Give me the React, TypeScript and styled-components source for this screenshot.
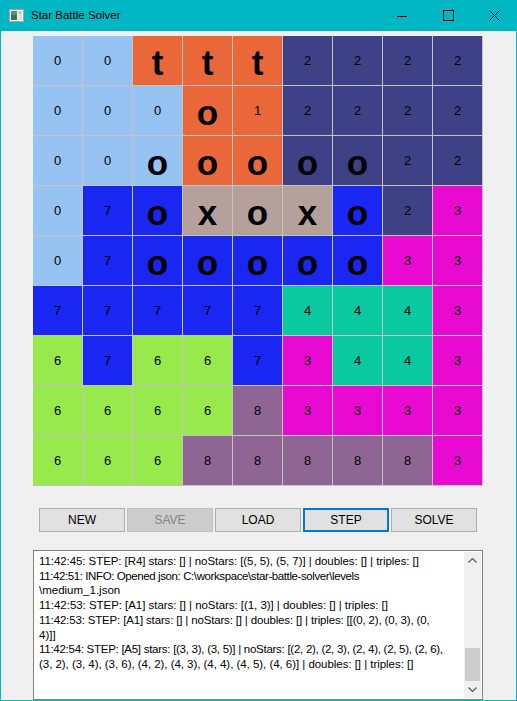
import React from "react";
import styled, { createGlobalStyle } from "styled-components";

const GlobalStyle = createGlobalStyle`
  html, body { margin: 0; padding: 0; background: #f0f0f0; }
  * { box-sizing: border-box; }
`;

const UI_FONT = `"Liberation Sans", Arial, sans-serif`;

const Window = styled.div`
  width: 517px;
  height: 701px;
  border: 1px solid #00b7c3;
  border-top: none;
  display: flex;
  flex-direction: column;
  background: #f0f0f0;
  font-family: ${UI_FONT};
  overflow: hidden;
`;

const TitleBar = styled.div`
  height: 31px;
  flex: none;
  background: #00b7c3;
  display: flex;
  align-items: center;
  margin: 0 -1px;
`;

const AppIcon = styled.svg`
  margin-left: 9px;
  margin-right: 7px;
  flex: none;
`;

const Title = styled.span`
  font-size: 11.5px;
  color: #000;
  flex: 1;
  padding-bottom: 1px;
`;

const CtrlButton = styled.div`
  width: 46px;
  height: 31px;
  display: flex;
  align-items: center;
  justify-content: center;
`;

const Client = styled.div`
  flex: 1;
  display: flex;
  flex-direction: column;
  padding: 5px 0 0 32px;
`;

const Board = styled.div`
  display: grid;
  grid-template-columns: repeat(9, 50px);
  grid-auto-rows: 50px;
  width: 450px;
`;

const Cell = styled.div<{ $bg: string }>`
  background: ${(p) => p.$bg};
  border-right: 1px solid #c4c4c4;
  border-bottom: 1px solid #c4c4c4;
  display: flex;
  align-items: center;
  justify-content: center;
  color: #000;
`;

const Num = styled.span`
  font-family: ${UI_FONT};
  font-size: 13px;
  line-height: 1;
`;

const Mark = styled.span`
  font-family: "Liberation Sans", Arial, sans-serif;
  font-weight: bold;
  font-size: 35px;
  line-height: 1;
  padding-top: 3px;
`;

const ButtonRow = styled.div`
  display: flex;
  gap: 2px;
  margin-top: 22px;
  padding-left: 6px;
`;

const Button = styled.div<{ $focused?: boolean; $disabled?: boolean }>`
  width: 86px;
  height: 24px;
  display: flex;
  align-items: center;
  justify-content: center;
  font-size: 12px;
  background: ${(p) => (p.$disabled ? "#cccccc" : "#e1e1e1")};
  color: ${(p) => (p.$disabled ? "#838383" : "#000")};
  border: ${(p) =>
    p.$focused ? "2px solid #0078d7" : p.$disabled ? "1px solid #bfbfbf" : "1px solid #adadad"};
`;

const LogBox = styled.div`
  margin-top: 18px;
  width: 450px;
  height: 150px;
  border: 1px solid #828282;
  background: #fff;
  display: flex;
`;

const LogText = styled.div`
  flex: 1;
  padding: 3px 0 0 5px;
  font-size: 11.5px;
  line-height: 14.7px;
  color: #000;
  white-space: nowrap;
  overflow: hidden;
`;

const LogLine = styled.div<{ $ls?: number }>`
  letter-spacing: ${(p) => (p.$ls ?? 0)}px;
`;

const Scrollbar = styled.div`
  width: 17px;
  margin: 1px 1px 1px 0;
  background: #f0f0f0;
  display: flex;
  flex-direction: column;
`;

const Arrow = styled.div`
  height: 17px;
  display: flex;
  align-items: center;
  justify-content: center;
`;

const Track = styled.div`
  flex: 1;
  display: flex;
  flex-direction: column;
  justify-content: flex-end;
`;

const Thumb = styled.div`
  height: 33px;
  margin: 0 1px 0 1px;
  background: #cdcdcd;
`;

const COLORS: Record<string, string> = {
  L: "#97c3f3",
  O: "#ea6739",
  D: "#3f4187",
  B: "#1a26f2",
  T: "#b5a09c",
  M: "#e90ad2",
  G: "#0ac9a0",
  N: "#98e94b",
  P: "#8f6693",
};

const REGIONS = [
  "LLOOODDDD",
  "LLLOODDDD",
  "LLLOODDDD",
  "LBBTTTBDM",
  "LBBBBBBMM",
  "BBBBBGGGM",
  "NBNNBMGGM",
  "NNNNPMMMM",
  "NNNPPPPPM",
];

const VALUES = [
  "00ttt2222",
  "000o12222",
  "00ooooo22",
  "07oxoxo23",
  "07ooooo33",
  "777774443",
  "676673443",
  "666683333",
  "666888883",
];

const LOG_LINES: { text: string; ls?: number }[] = [
  { text: "11:42:45: STEP: [R4] stars: [] | noStars: [(5, 5), (5, 7)] | doubles: [] | triples: []", ls: -0.07 },
  { text: "11:42:51: INFO: Opened json: C:\\workspace\\star-battle-solver\\levels", ls: -0.4 },
  { text: "\\medium_1.json" },
  { text: "11:42:53: STEP: [A1] stars: [] | noStars: [(1, 3)] | doubles: [] | triples: []", ls: -0.04 },
  { text: "11:42:53: STEP: [A1] stars: [] | noStars: [] | doubles: [] | triples: [[(0, 2), (0, 3), (0,", ls: -0.16 },
  { text: "4)]]" },
  { text: "11:42:54: STEP: [A5] stars: [(3, 3), (3, 5)] | noStars: [(2, 2), (2, 3), (2, 4), (2, 5), (2, 6),", ls: -0.27 },
  { text: "(3, 2), (3, 4), (3, 6), (4, 2), (4, 3), (4, 4), (4, 5), (4, 6)] | doubles: [] | triples: []", ls: -0.04 },
];

export default function App() {
  return (
    <>
      <GlobalStyle />
      <Window>
        <TitleBar>
          <AppIcon width="15" height="13" viewBox="0 0 15 13">
            <rect x="0.5" y="0.5" width="14" height="12" fill="#f4f4f4" stroke="#a8a8a8" />
            <rect x="2" y="2" width="6" height="9" fill="#3f6f6a" />
            <rect x="2" y="2" width="6" height="4" fill="#5c8c86" />
            <rect x="9" y="2" width="4" height="9" fill="#dfe6e4" />
            <rect x="10" y="3" width="2" height="2" fill="#9bb" />
          </AppIcon>
          <Title>Star Battle Solver</Title>
          <CtrlButton>
            <svg width="10" height="10" viewBox="0 0 10 10">
              <line x1="0" y1="5.5" x2="10" y2="5.5" stroke="#000" strokeWidth="1" />
            </svg>
          </CtrlButton>
          <CtrlButton>
            <svg width="11" height="11" viewBox="0 0 11 11">
              <rect x="0.5" y="0.5" width="10" height="10" fill="none" stroke="#000" strokeWidth="1" />
            </svg>
          </CtrlButton>
          <CtrlButton>
            <svg width="11" height="11" viewBox="0 0 11 11">
              <path d="M0.5 0.5 L10.5 10.5 M10.5 0.5 L0.5 10.5" stroke="#000" strokeWidth="1" />
            </svg>
          </CtrlButton>
        </TitleBar>
        <Client>
          <Board>
            {REGIONS.map((row, r) =>
              row.split("").map((reg, c) => {
                const v = VALUES[r][c];
                const isMark = v === "t" || v === "o" || v === "x";
                return (
                  <Cell key={`${r}-${c}`} $bg={COLORS[reg]}>
                    {isMark ? <Mark>{v}</Mark> : <Num>{v}</Num>}
                  </Cell>
                );
              })
            )}
          </Board>
          <ButtonRow>
            <Button>NEW</Button>
            <Button $disabled>SAVE</Button>
            <Button>LOAD</Button>
            <Button $focused>STEP</Button>
            <Button>SOLVE</Button>
          </ButtonRow>
          <LogBox>
            <LogText>
              {LOG_LINES.map((l, i) => (
                <LogLine key={i} $ls={l.ls}>
                  {l.text}
                </LogLine>
              ))}
            </LogText>
            <Scrollbar>
              <Arrow>
                <svg width="9" height="5" viewBox="0 0 9 5">
                  <polyline points="0.5,4.5 4.5,0.5 8.5,4.5" fill="none" stroke="#606060" strokeWidth="1.3" />
                </svg>
              </Arrow>
              <Track>
                <Thumb />
              </Track>
              <Arrow>
                <svg width="9" height="5" viewBox="0 0 9 5">
                  <polyline points="0.5,0.5 4.5,4.5 8.5,0.5" fill="none" stroke="#606060" strokeWidth="1.3" />
                </svg>
              </Arrow>
            </Scrollbar>
          </LogBox>
        </Client>
      </Window>
    </>
  );
}
